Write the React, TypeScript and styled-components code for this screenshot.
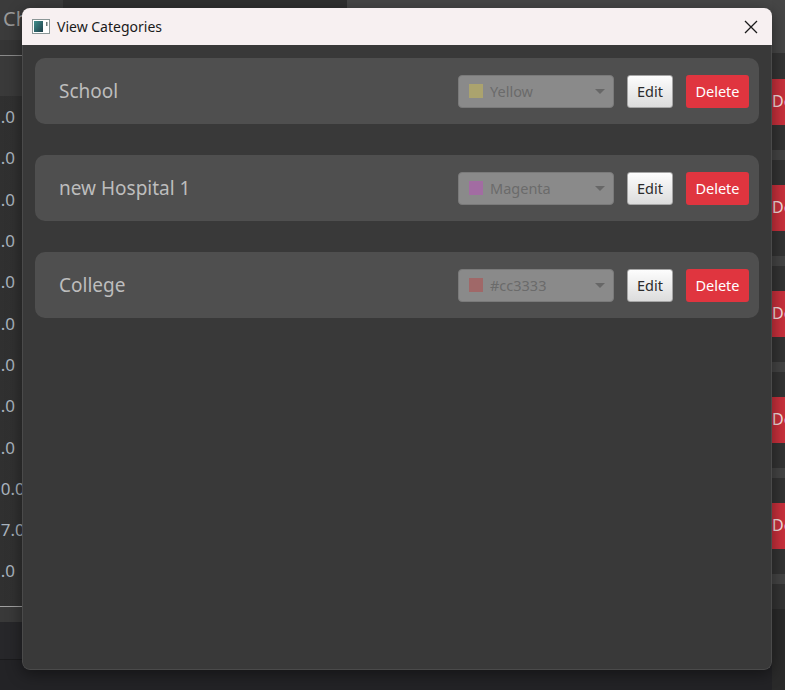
import React from "react";
import styled, {createGlobalStyle} from "styled-components";

const GlobalStyle = createGlobalStyle`
    html, body {
        margin: 0;
        padding: 0;
    }
    body {
        width: 785px;
        height: 690px;
        overflow: hidden;
        background: #2f2f2f;
        font-family: "Noto Sans", "Open Sans", sans-serif;
    }
`

const Stage = styled.div`
    position: relative;
    width: 785px;
    height: 690px;
    overflow: hidden;
`

/* ---- the app behind the dialog ---- */

const Backdrop = styled.div`
    display: flex;
    width: 100%;
    height: 100%;
`

const LeftPane = styled.div`
    width: 63px;
    display: flex;
    flex-direction: column;
    overflow: hidden;
    background: #232326;
`

const Block = styled.div<{ $h: number; $bg: string }>`
    height: ${p => p.$h}px;
    flex-shrink: 0;
    background: ${p => p.$bg};
`

const TabLabel = styled(Block)`
    font-family: "Noto Sans", sans-serif;
    font-size: 20px;
    line-height: 38px;
    color: #9a9a9a;
    padding-left: 3px;
    white-space: nowrap;
`

const NumberList = styled.div`
    height: 510px;
    flex-shrink: 0;
    background: linear-gradient(90deg, #303030, #343434);
    display: flex;
    flex-direction: column;
`

const NumberRow = styled.div`
    height: 41.3px;
    flex-shrink: 0;
    display: flex;
    align-items: center;
    margin-left: -9px;
    font-family: "Noto Sans", sans-serif;
    font-size: 17px;
    color: #aab4be;
    white-space: nowrap;
`

const MiddlePane = styled.div`
    flex: 1;
    display: flex;
    flex-direction: column;
    background: #232326;
`

const TopSegments = styled.div`
    height: 40px;
    display: flex;
`

const Segment = styled.div<{ $w?: number; $bg: string }>`
    ${p => (p.$w ? `width: ${p.$w}px;` : "flex: 1;")}
    background: ${p => p.$bg};
`

const RightPane = styled.div`
    width: 13px;
    display: flex;
    flex-direction: column;
    overflow: hidden;
    background: #2a2a2a;
`

const ActionRow = styled.div`
    height: 106px;
    flex-shrink: 0;
    display: flex;
    flex-direction: column;
    background: #333;
`

const RedButton = styled.div`
    height: 46px;
    background: #c9303c;
    color: #f4dede;
    font-family: "Noto Sans", sans-serif;
    font-size: 16px;
    line-height: 44px;
    padding-left: 0;
    white-space: nowrap;
`

const Stripe = styled.div`
    height: 10px;
    margin-top: 25px;
    background: #444;
`

/* ---- the dialog ---- */

const Dialog = styled.div`
    position: absolute;
    left: 22px;
    top: 8px;
    width: 750px;
    height: 662px;
    border-radius: 8px;
    overflow: hidden;
    display: flex;
    flex-direction: column;
    box-shadow: 0 4px 16px rgba(0, 0, 0, 0.45);
`

const TitleBar = styled.div`
    height: 37px;
    flex-shrink: 0;
    background: #f7f0f1;
    display: flex;
    align-items: center;
    padding: 0 14px 0 10px;
    gap: 7px;
    font-family: "Noto Sans", sans-serif;
    font-size: 14px;
    color: #1a1a1a;

    .title {
        flex: 1;
    }
`

const Body = styled.div`
    flex: 1;
    background: #393939;
    border: 1px solid #4a4a4a;
    border-top: none;
    border-radius: 0 0 8px 8px;
    padding: 13px 12px;
    display: flex;
    flex-direction: column;
    gap: 31px;
`

const Card = styled.div`
    height: 66px;
    border-radius: 10px;
    background: #4f4f4f;
    display: flex;
    align-items: center;
    gap: 13px;
    padding: 0 10px 0 24px;

    .name {
        flex: 1;
        font-size: 19px;
        color: #bdbdbd;
    }
`

const Combo = styled.div`
    width: 156px;
    height: 33px;
    box-sizing: border-box;
    border: 1px solid #7a7a7a;
    border-radius: 4px;
    background: #8a8a8a;
    display: flex;
    align-items: center;
    gap: 7px;
    padding: 0 8px 0 10px;
    font-size: 14.5px;
    color: #6b6b6b;

    .arrow {
        margin-left: auto;
        width: 0;
        height: 0;
        border-left: 5px solid transparent;
        border-right: 5px solid transparent;
        border-top: 5px solid #676767;
    }
`

const Swatch = styled.span<{ $color: string }>`
    width: 14px;
    height: 14px;
    background: ${p => p.$color};
`

const Button = styled.button<{ $danger?: boolean }>`
    height: 33px;
    box-sizing: border-box;
    padding: 0;
    border-radius: 3px;
    font-family: "Noto Sans", sans-serif;
    font-size: 14.5px;
    cursor: pointer;
    width: ${p => (p.$danger ? 63 : 46)}px;
    border: ${p => (p.$danger ? "none" : "1px solid #a6a6a6")};
    background: ${p => (p.$danger ? "#e0353f" : "linear-gradient(#fdfdfd, #dcdcdc)")};
    color: ${p => (p.$danger ? "#fff" : "#2b2b2b")};
`

const categories = [
    {name: "School", color: "Yellow", swatch: "#aba36e"},
    {name: "new Hospital 1", color: "Magenta", swatch: "#a26ca2"},
    {name: "College", color: "#cc3333", swatch: "#a06868"},
];

const numbers = ["1.0", "1.0", "1.0", "1.0", "1.0", "1.0", "1.0", "1.0", "1.0", "10.0", "17.0", "1.0"];

function AppIcon() {
    return (
        <svg width="18" height="15" viewBox="0 0 18 15">
            <defs>
                <linearGradient id="pane" x1="0" y1="0" x2="1" y2="1">
                    <stop offset="0" stopColor="#3f8f8c"/>
                    <stop offset="1" stopColor="#1f3f4a"/>
                </linearGradient>
            </defs>
            <rect x="0.5" y="0.5" width="17" height="14" fill="#fff" stroke="#8a9696"/>
            <rect x="2" y="2" width="9" height="11" fill="url(#pane)"/>
            <rect x="14" y="3" width="1.5" height="4" fill="#6d7a7a"/>
        </svg>
    );
}

function CloseIcon() {
    return (
        <svg width="14" height="14" viewBox="0 0 14 14">
            <path d="M1 1 L13 13 M13 1 L1 13" stroke="#1a1a1a" strokeWidth="1.3"/>
        </svg>
    );
}

function App() {
    return (
        <Stage>
            <GlobalStyle/>
            <Backdrop>
                <LeftPane>
                    <TabLabel $h={40} $bg="#3b3b3b">Ch</TabLabel>
                    <Block $h={15} $bg="#353535"/>
                    <Block $h={1} $bg="#8a8a8a"/>
                    <Block $h={40} $bg="#3a3a3a"/>
                    <NumberList>
                        {numbers.map((n, i) => <NumberRow key={i}>{n}</NumberRow>)}
                    </NumberList>
                    <Block $h={1} $bg="#a0a0a0"/>
                    <Block $h={15} $bg="#393939"/>
                    <Block $h={37} $bg="#27272a"/>
                    <Block $h={1} $bg="#1b1b1d"/>
                </LeftPane>
                <MiddlePane>
                    <TopSegments>
                        <Segment $w={284} $bg="#303030"/>
                        <Segment $bg="#474747"/>
                    </TopSegments>
                </MiddlePane>
                <RightPane>
                    <Block $h={53} $bg="#464646"/>
                    <Block $h={26} $bg="#343434"/>
                    {[0, 1, 2, 3, 4].map(i => (
                        <ActionRow key={i}>
                            <RedButton>Delete</RedButton>
                            <Stripe/>
                        </ActionRow>
                    ))}
                </RightPane>
            </Backdrop>

            <Dialog>
                <TitleBar>
                    <AppIcon/>
                    <span className="title">View Categories</span>
                    <CloseIcon/>
                </TitleBar>
                <Body>
                    {categories.map(c => (
                        <Card key={c.name}>
                            <span className="name">{c.name}</span>
                            <Combo>
                                <Swatch $color={c.swatch}/>
                                <span>{c.color}</span>
                                <span className="arrow"/>
                            </Combo>
                            <Button>Edit</Button>
                            <Button $danger>Delete</Button>
                        </Card>
                    ))}
                </Body>
            </Dialog>
        </Stage>
    );
}

export default App;
